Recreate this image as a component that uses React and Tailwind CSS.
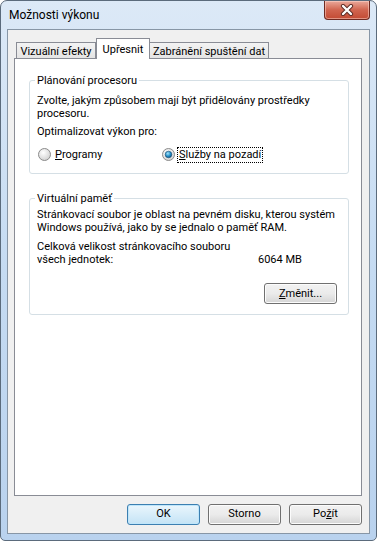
import React from 'react';

const font = { fontFamily: 'Roboto, "Noto Sans", "Liberation Sans", sans-serif' };

function CloseButton() {
  return (
    <div className="mr-[6px] w-[46px] h-[19px] rounded-b-[4px] border border-t-0 border-[#6d2a22] bg-gradient-to-b from-[#e9a99b] via-[#d0644f] to-[#c34a33] flex items-center justify-center shadow-[inset_0_0_0_1px_rgba(255,220,210,0.5)]">
      <svg width="14" height="12" viewBox="0 0 14 12">
        <path d="M3 2 L11 10 M11 2 L3 10" stroke="#5a2a24" strokeWidth="4.2" strokeLinecap="round" />
        <path d="M3 2 L11 10 M11 2 L3 10" stroke="#ffffff" strokeWidth="2.4" strokeLinecap="round" />
      </svg>
    </div>
  );
}

function Radio({ checked }) {
  return (
    <svg width="13" height="13" viewBox="0 0 13 13" className="shrink-0">
      <defs>
        <radialGradient id={checked ? 'rg1' : 'rg0'} cx="40%" cy="35%" r="70%">
          <stop offset="0%" stopColor="#ffffff" />
          <stop offset="100%" stopColor="#cfcfcf" />
        </radialGradient>
        <radialGradient id="dot" cx="40%" cy="35%" r="70%">
          <stop offset="0%" stopColor="#a4e3fb" />
          <stop offset="60%" stopColor="#1f8bc4" />
          <stop offset="100%" stopColor="#0b4c78" />
        </radialGradient>
      </defs>
      <circle cx="6.5" cy="6.5" r="6" fill={`url(#${checked ? 'rg1' : 'rg0'})`} stroke="#8b8b8b" />
      {checked && <circle cx="6.5" cy="6.5" r="3.3" fill="url(#dot)" stroke="#1d4e73" strokeWidth="0.6" />}
    </svg>
  );
}

function Button({ children, isDefault, className = '' }) {
  return (
    <div
      className={
        'w-[73px] h-[21px] rounded-[3px] border flex items-center justify-center text-[11px] text-black whitespace-nowrap ' +
        (isDefault
          ? 'border-[#3c7fb1] bg-gradient-to-b from-[#eaf6fd] to-[#c4e3f5] shadow-[inset_0_0_0_1px_#bfe6fb] '
          : 'border-[#707070] bg-gradient-to-b from-[#f2f2f2] via-[#ebebeb] to-[#d5d5d5] shadow-[inset_0_0_0_1px_#fcfcfc] ') +
        className
      }
    >
      {children}
    </div>
  );
}

function Group({ title, children, className = '' }) {
  return (
    <fieldset className={'min-w-0 ml-[14px] mr-[12px] border border-[#d5dfe5] rounded-[3px] pl-[5px] pr-[11px] ' + className}>
      <legend className="px-[2px] leading-[13px] text-black">{title}</legend>
      <div className="pl-[2px]">{children}</div>
    </fieldset>
  );
}

export default function App() {
  return (
    <div style={font} className="w-[377px] h-[541px] text-[11px] text-black whitespace-nowrap">
      <div className="w-full h-full flex flex-col rounded-t-[7px] rounded-b-[5px] border border-[#5b6b7c] bg-gradient-to-b from-[#dce9f7] via-[#c5dbf2] to-[#b9d2ee]">
        <div className="h-[28px] flex justify-between items-start shrink-0">
          <div className="pl-[8px] pt-[6px] leading-[16px] text-[12px] text-black">Možnosti výkonu</div>
          <CloseButton />
        </div>
        <div className="mx-[6px] mb-[6px] flex-1 border border-[#8796a6] bg-[#f0f0f0] flex flex-col">
          <div className="flex items-end pt-[7px] pl-[8px] h-[28px] shrink-0">
            <div className="w-[80px] h-[17px] -mb-px border border-b-0 border-[#898c95] bg-gradient-to-b from-[#f3f3f3] to-[#e3e3e3] flex items-center justify-center leading-[13px]">
              Vizuální efekty
            </div>
            <div className="relative z-10 w-[54px] h-[21px] -mb-px border border-b-0 border-[#898c95] bg-white flex items-center justify-center leading-[13px]">
              Upřesnit
            </div>
            <div className="w-[119px] h-[17px] -mb-px border border-b-0 border-l-0 border-[#898c95] bg-gradient-to-b from-[#f3f3f3] to-[#e3e3e3] flex items-center justify-center leading-[13px]">
              Zabránění spuštění dat
            </div>
          </div>
          <div className="ml-[6px] mr-[7px] flex-1 border border-[#898c95] bg-white pt-[15px] leading-[13px]">
            <Group title="Plánování procesoru" className="pb-[12px]">
              <p className="mt-[7px]">
                Zvolte, jakým způsobem mají být přidělovány prostředky
                <br />
                procesoru.
              </p>
              <p className="mt-[5px]">Optimalizovat výkon pro:</p>
              <div className="mt-[10px] flex items-center h-[13px]">
                <div className="w-[125px] flex items-center gap-[4px] pl-[1px]">
                  <Radio checked={false} />
                  <span><span className="underline">P</span>rogramy</span>
                </div>
                <div className="flex items-center gap-[2px]">
                  <Radio checked />
                  <span className="border border-dotted border-black px-[1px] leading-[14px]">
                    <span className="underline">S</span>lužby na pozadí
                  </span>
                </div>
              </div>
            </Group>
            <Group title="Virtuální paměť" className="mt-[18px] pb-[10px]">
              <p className="mt-[3px]">
                Stránkovací soubor je oblast na pevném disku, kterou systém
                <br />
                Windows používá, jako by se jednalo o paměť RAM.
              </p>
              <p className="mt-[6px]">Celková velikost stránkovacího souboru</p>
              <div className="flex">
                <span className="w-[221px]">všech jednotek:</span>
                <span>6064 MB</span>
              </div>
              <div className="mt-[17px] flex justify-end">
                <Button className="w-[72px]">
                  <span><span className="underline">Z</span>měnit...</span>
                </Button>
              </div>
            </Group>
          </div>
          <div className="mt-[8px] mb-[8px] pr-[7px] flex justify-end gap-[8px] shrink-0">
            <Button isDefault>OK</Button>
            <Button>Storno</Button>
            <Button>
              <span>Po<span className="underline">ž</span>ít</span>
            </Button>
          </div>
        </div>
      </div>
    </div>
  );
}
